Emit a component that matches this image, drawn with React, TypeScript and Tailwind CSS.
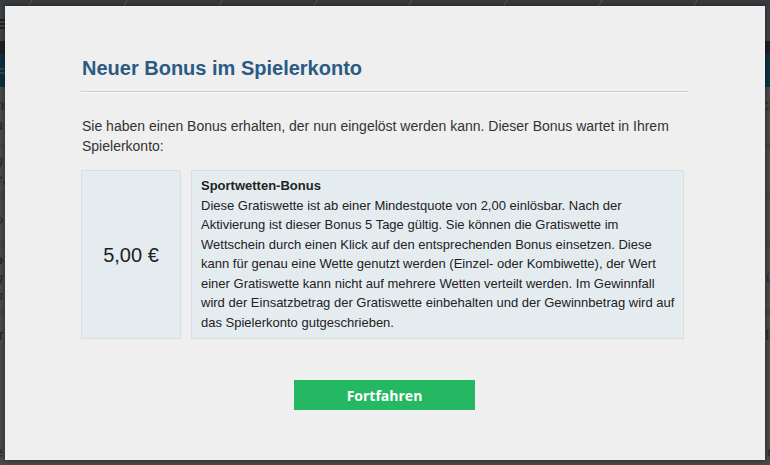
import React from 'react';

const bonusLines = [
  'Diese Gratiswette ist ab einer Mindestquote von 2,00 einlösbar. Nach der',
  'Aktivierung ist dieser Bonus 5 Tage gültig. Sie können die Gratiswette im',
  'Wettschein durch einen Klick auf den entsprechenden Bonus einsetzen. Diese',
  'kann für genau eine Wette genutzt werden (Einzel- oder Kombiwette), der Wert',
  'einer Gratiswette kann nicht auf mehrere Wetten verteilt werden. Im Gewinnfall',
  'wird der Einsatzbetrag der Gratiswette einbehalten und der Gewinnbetrag wird auf',
  'das Spielerkonto gutgeschrieben.',
];

export default function App() {
  return (
    <div className="relative w-[770px] h-[465px] overflow-hidden bg-[#4a4a4a] font-['Liberation_Sans',Arial,sans-serif]">
      {/* dimmed page behind the dialog */}
      <div className="flex flex-col w-full h-full text-[#262626] text-[14px]">
        <div className="h-[6px] bg-[#3a3d40] flex gap-[50px] px-[30px]">
          {[0, 1, 2, 3, 4, 5, 6, 7].map(i => (
            <div key={i} className="w-[70px] h-full border-l border-[#5a5d60] skew-x-[-30deg]" />
          ))}
        </div>
        <div className="h-[35px] bg-[#404346] flex items-center">
          <div className="flex flex-col gap-[2px] w-[6px]">
            <div className="h-[2px] bg-[#222]" />
            <div className="h-[2px] bg-[#222]" />
            <div className="h-[2px] bg-[#222]" />
          </div>
        </div>
        <div className="h-[13px] bg-[#1e2124]" />
        <div className="h-[33px] bg-[#0c3340] flex items-center">
          <div className="flex flex-col gap-[2px] w-[5px]">
            <div className="h-[2px] bg-[#2a4a55]" />
            <div className="h-[2px] bg-[#2a4a55]" />
          </div>
        </div>
        <div className="h-[56px] bg-[#4a4a4a] flex flex-col justify-center leading-[20px]">
          <div className="flex justify-between"><span className="-ml-[4px]">ni</span><span className="-mr-[2px]">cl</span></div>
          <div><span className="-ml-[5px]">u</span></div>
        </div>
        <div className="h-[6px] bg-[#444]" />
        <div className="h-[42px] bg-[#4a4a4a] flex flex-col justify-center leading-[18px] italic font-['Liberation_Serif',serif]">
          <span className="-ml-[4px]">g</span>
          <span className="-ml-[4px]">e,</span>
        </div>
        <div className="h-[8px] bg-[#444]" />
        <div className="h-[40px] bg-[#4a4a4a] flex items-center italic font-['Liberation_Serif',serif]">
          <span className="-ml-[4px]">o</span>
        </div>
        <div className="h-[8px] bg-[#444]" />
        <div className="h-[62px] bg-[#4a4a4a] flex flex-col justify-center leading-[18px] font-['Liberation_Serif',serif]">
          <span className="-ml-[4px] font-bold">o</span>
          <div className="flex justify-between"><span className="-ml-[4px] italic">g</span><span className="-mr-[3px]">ü</span></div>
          <span className="-ml-[4px] italic">n</span>
        </div>
        <div className="h-[6px] bg-[#444]" />
        <div className="h-[40px] bg-[#4a4a4a] flex items-center justify-between">
          <span className="-ml-[5px]">ır</span><span className="-mr-[2px]">li</span>
        </div>
        <div className="flex-1 bg-[#4a4a4a] flex items-end justify-between pb-[2px]">
          <span className="-ml-[5px]">e</span><span className="-mr-[5px]">o</span>
        </div>
      </div>

      {/* dialog */}
      <div className="absolute left-[5px] top-[6px] w-[760px] h-[454px] bg-[#efefef] shadow-[0_0_6px_rgba(0,0,0,0.5)] pt-[51px] pl-[76px] pr-[77px]">
        <h2 className="text-[20px] leading-[22px] font-bold text-[#2b5a84] pb-[12px] border-b border-[#c6cfd6] shadow-[0_1px_0_#fafafa] pl-[1px]">
          Neuer Bonus im Spielerkonto
        </h2>
        <p className="mt-[25px] text-[14px] leading-[19.6px] text-[#333] pl-[1px]">
          Sie haben einen Bonus erhalten, der nun eingelöst werden kann. Dieser Bonus wartet in Ihrem Spielerkonto:
        </p>
        <div className="mt-[14px] flex gap-[10px]">
          <div className="w-[100px] shrink-0 bg-[#e4ecf0] border border-[#d8dfe3] flex items-center justify-center text-[20px] text-[#222]">
            5,00 €
          </div>
          <div className="w-[493px] bg-[#e4ecf0] border border-[#d8dfe3] pt-[5px] pb-[6px] pl-[9px] pr-[9px] text-[13px] leading-[19.5px] text-[#222]">
            <div className="font-bold">Sportwetten-Bonus</div>
            {bonusLines.map(line => (
              <div key={line} className="whitespace-nowrap">{line}</div>
            ))}
          </div>
        </div>
        <div className="mt-[41px] flex justify-center">
          <button className="w-[181px] h-[30px] bg-[#25b863] text-white text-[14px] font-bold font-['Open_Sans',sans-serif]">
            Fortfahren
          </button>
        </div>
      </div>
    </div>
  );
}
